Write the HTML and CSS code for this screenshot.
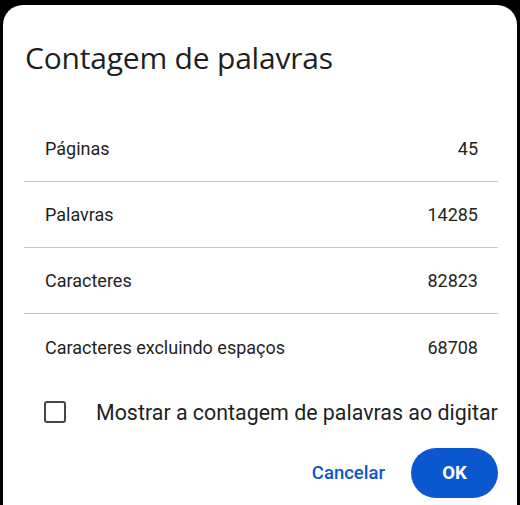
FILE: index.html
```html
<!DOCTYPE html>
<html lang="pt">
<head>
  <meta charset="UTF-8" />
  <title>Contagem de palavras</title>
  <link rel="stylesheet" href="styles.css">
</head>
<body>
  <div class="dialog">
    <h1 class="title">Contagem de palavras</h1>

    <!-- Counts table -->
    <div class="stats">
      <div class="row"><span>Páginas</span><span>45</span></div>
      <div class="row"><span>Palavras</span><span>14285</span></div>
      <div class="row"><span>Caracteres</span><span>82823</span></div>
      <div class="row"><span>Caracteres excluindo espaços</span><span>68708</span></div>
    </div>

    <label class="check">
      <span class="box"></span>
      <span class="check-label">Mostrar a contagem de palavras ao digitar</span>
    </label>

    <div class="actions">
      <button class="btn btn-text">Cancelar</button>
      <button class="btn btn-filled">OK</button>
    </div>
  </div>
</body>
</html>
```

FILE: styles.css
```css
* {
  box-sizing: border-box;
  margin: 0;
  padding: 0;
}
body {
  background: #000;
  height: 505px;
  overflow: hidden;
  font-family: Roboto, "Noto Sans", sans-serif;
  color: #1f1f1f;
}
.dialog {
  margin: 5px 3px 0 3px;
  height: 520px;
  background: #fff;
  border-radius: 20px;
  padding: 33px 19px 0 21px;
}
.title {
  font-family: "Open Sans", sans-serif;
  font-weight: 400;
  font-size: 30px;
  line-height: 40px;
  letter-spacing: -0.2px;
  padding-left: 1px;
}
/* Counts table */
.stats {
  margin-top: 38px;
}
.row {
  display: flex;
  justify-content: space-between;
  align-items: center;
  height: 66px;
  padding: 0 20px 0 21px;
  font-size: 18px;
  border-bottom: 1px solid #c7c7c7;
}
.row:last-child {
  border-bottom: none;
}
.check {
  display: flex;
  align-items: center;
  margin-top: 9px;
  padding-left: 20px;
  height: 46px;
}
.box {
  width: 22px;
  height: 22px;
  border: 2px solid #444746;
  border-radius: 3px;
}
.check-label {
  margin-left: 30px;
  font-size: 21.4px;
}
.actions {
  display: flex;
  justify-content: flex-end;
  align-items: center;
  gap: 26px;
  margin-top: 13px;
}
.btn {
  font-family: Roboto, sans-serif;
  font-size: 18.5px;
  font-weight: 500;
  border: none;
  background: none;
  cursor: pointer;
}
.btn-text {
  color: #0b57d0;
}
.btn-filled {
  width: 87px;
  height: 50px;
  border-radius: 25px;
  background: #0b57d0;
  color: #fff;
  font-weight: 700;
}
```
